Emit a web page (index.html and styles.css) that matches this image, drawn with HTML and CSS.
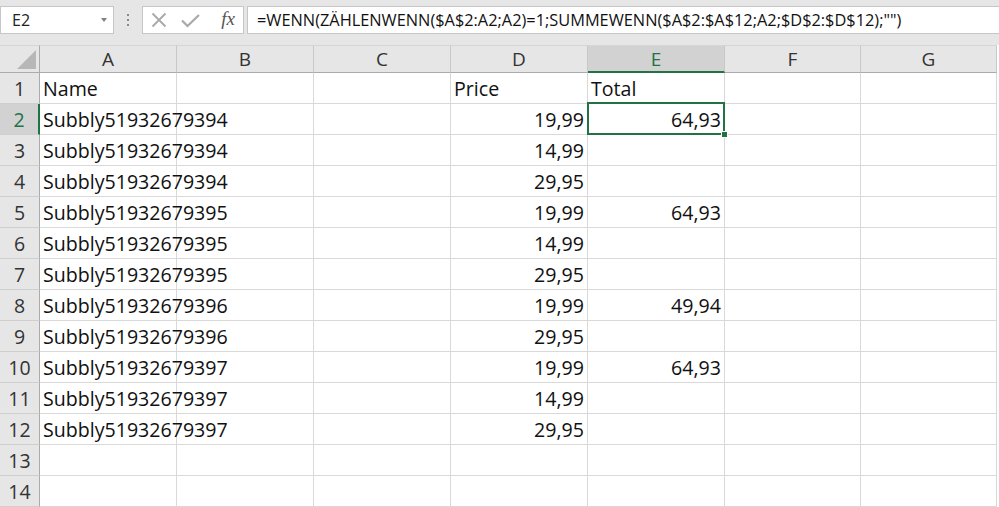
FILE: index.html
```html
<!DOCTYPE html>
<html>
<head>
<meta charset="utf-8">
<link rel="stylesheet" href="styles.css">
</head>
<body>
<div class="app">
  <div class="toolbar">
    <div class="namebox"><span class="nb-text">E2</span><span class="nb-arrow"></span></div>
    <div class="grip"><span></span><span></span><span></span></div>
    <div class="fbuttons">
      <svg class="ico-x" width="16" height="16" viewBox="0 0 16 16"><path d="M1.5 1.5 L14.5 14.5 M14.5 1.5 L1.5 14.5" stroke="#a9a9a9" stroke-width="1.8" fill="none"/></svg>
      <svg class="ico-check" width="19" height="15" viewBox="0 0 19 15"><path d="M1 7.5 L6.5 13 L18 2" stroke="#a9a9a9" stroke-width="2.2" fill="none"/></svg>
      <span class="fx">fx</span>
    </div>
    <div class="formula">=WENN(ZÄHLENWENN($A$2:A2;A2)=1;SUMMEWENN($A$2:$A$12;A2;$D$2:$D$12);"")</div>
  </div>
  <div class="sheet">
    <div class="corner"><span class="tri"></span></div>
    <div class="ch">A</div><div class="ch">B</div><div class="ch">C</div><div class="ch">D</div><div class="ch ch-sel">E</div><div class="ch">F</div><div class="ch">G</div>

    <div class="rh">1</div><div class="c">Name</div><div class="c"></div><div class="c"></div><div class="c">Price</div><div class="c">Total</div><div class="c"></div><div class="c"></div>
    <div class="rh rh-sel">2</div><div class="c">Subbly51932679394</div><div class="c"></div><div class="c"></div><div class="c n">19,99</div><div class="c n sel">64,93<span class="handle"></span></div><div class="c"></div><div class="c"></div>
    <div class="rh">3</div><div class="c">Subbly51932679394</div><div class="c"></div><div class="c"></div><div class="c n">14,99</div><div class="c n"></div><div class="c"></div><div class="c"></div>
    <div class="rh">4</div><div class="c">Subbly51932679394</div><div class="c"></div><div class="c"></div><div class="c n">29,95</div><div class="c n"></div><div class="c"></div><div class="c"></div>
    <div class="rh">5</div><div class="c">Subbly51932679395</div><div class="c"></div><div class="c"></div><div class="c n">19,99</div><div class="c n">64,93</div><div class="c"></div><div class="c"></div>
    <div class="rh">6</div><div class="c">Subbly51932679395</div><div class="c"></div><div class="c"></div><div class="c n">14,99</div><div class="c n"></div><div class="c"></div><div class="c"></div>
    <div class="rh">7</div><div class="c">Subbly51932679395</div><div class="c"></div><div class="c"></div><div class="c n">29,95</div><div class="c n"></div><div class="c"></div><div class="c"></div>
    <div class="rh">8</div><div class="c">Subbly51932679396</div><div class="c"></div><div class="c"></div><div class="c n">19,99</div><div class="c n">49,94</div><div class="c"></div><div class="c"></div>
    <div class="rh">9</div><div class="c">Subbly51932679396</div><div class="c"></div><div class="c"></div><div class="c n">29,95</div><div class="c n"></div><div class="c"></div><div class="c"></div>
    <div class="rh">10</div><div class="c">Subbly51932679397</div><div class="c"></div><div class="c"></div><div class="c n">19,99</div><div class="c n">64,93</div><div class="c"></div><div class="c"></div>
    <div class="rh">11</div><div class="c">Subbly51932679397</div><div class="c"></div><div class="c"></div><div class="c n">14,99</div><div class="c n"></div><div class="c"></div><div class="c"></div>
    <div class="rh">12</div><div class="c">Subbly51932679397</div><div class="c"></div><div class="c"></div><div class="c n">29,95</div><div class="c n"></div><div class="c"></div><div class="c"></div>
    <div class="rh">13</div><div class="c"></div><div class="c"></div><div class="c"></div><div class="c"></div><div class="c"></div><div class="c"></div><div class="c"></div>
    <div class="rh">14</div><div class="c"></div><div class="c"></div><div class="c"></div><div class="c"></div><div class="c"></div><div class="c"></div><div class="c"></div>
  </div>
</div>
</body>
</html>
```

FILE: styles.css
```css
* { box-sizing: border-box; }
html, body {
  margin: 0;
  padding: 0;
  background: #e6e6e6;
  overflow: hidden;
}
.app {
  width: 999px;
  height: 507px;
  overflow: hidden;
  font-family: "Open Sans", "Liberation Sans", sans-serif;
}
.toolbar {
  height: 45px;
  display: flex;
  align-items: flex-start;
  padding-top: 6px;
  background: #e6e6e6;
}
.namebox {
  width: 115px;
  height: 28px;
  background: #fff;
  border: 1px solid #c6c6c6;
  display: flex;
  align-items: center;
  padding-left: 11px;
  position: relative;
  font-size: 16px;
  color: #222;
}
.nb-text { flex: 1; }
.nb-arrow {
  width: 0;
  height: 0;
  border-left: 3.5px solid transparent;
  border-right: 3.5px solid transparent;
  border-top: 4px solid #808080;
  margin-right: 6px;
}
.grip {
  width: 29px;
  height: 28px;
  display: flex;
  flex-direction: column;
  align-items: center;
  justify-content: center;
  gap: 3px;
}
.grip span {
  width: 2px;
  height: 2px;
  background: #8a8a8a;
}
.fbuttons {
  width: 103px;
  height: 28px;
  background: #fff;
  border: 1px solid #c6c6c6;
  display: flex;
  align-items: center;
  padding-left: 8px;
}
.ico-x { margin-right: 14px; }
.ico-check { margin-right: 21px; margin-top: 1px; }
.fx {
  font-family: "Liberation Serif", serif;
  font-style: italic;
  font-size: 19px;
  color: #555;
  margin-top: -2px;
}
.formula {
  margin-left: 3px;
  width: 752px;
  flex: none;
  height: 28px;
  background: #fff;
  border: 1px solid #c6c6c6;
  border-right: none;
  padding-left: 9px;
  font-size: 16.35px;
  line-height: 27px;
  color: #111;
  white-space: nowrap;
}
.sheet {
  display: grid;
  grid-template-columns: 40px 137px 137px 137px 137px 137px 136px 136px;
  grid-template-rows: 28px repeat(14, 31px);
  background: #fff;
  width: 999px;
}
.corner {
  background: #e6e6e6;
  border-right: 1px solid #ababab;
  border-bottom: 1px solid #ababab;
  border-top: 1px solid #d6d6d6;
  position: relative;
}
.tri {
  position: absolute;
  right: 3px;
  bottom: 3px;
  width: 0;
  height: 0;
  border-left: 19px solid transparent;
  border-bottom: 19px solid #b7b7b7;
}
.ch {
  background: #e6e6e6;
  border-top: 1px solid #d6d6d6;
  border-right: 1px solid #c8c8c8;
  border-bottom: 1px solid #ababab;
  display: flex;
  align-items: center;
  justify-content: center;
  font-size: 19px;
  color: #333;
}
.ch-sel {
  background: #d2d2d2;
  color: #217346;
  border-bottom: 2px solid #217346;
}
.rh {
  background: #e6e6e6;
  border-right: 1px solid #ababab;
  border-bottom: 1px solid #cfcfcf;
  display: flex;
  align-items: center;
  justify-content: center;
  font-size: 19.5px;
  color: #333;
}
.rh-sel {
  background: #d2d2d2;
  color: #217346;
  border-right: 2px solid #217346;
}
.c {
  border-right: 1px solid #d9d9d9;
  border-bottom: 1px solid #d9d9d9;
  font-size: 19.6px;
  line-height: 31px;
  padding: 0 3px;
  white-space: nowrap;
  color: #111;
  overflow: visible;
}
.c.n { text-align: right; }
.sel { position: relative; }
.sel::after {
  content: "";
  position: absolute;
  left: -1px;
  top: -2px;
  right: -1px;
  bottom: -1px;
  border: 2px solid #217346;
  pointer-events: none;
}
.handle {
  position: absolute;
  right: -4px;
  bottom: -4px;
  width: 7px;
  height: 7px;
  background: #217346;
  border: 1px solid #fff;
  z-index: 2;
}
```
